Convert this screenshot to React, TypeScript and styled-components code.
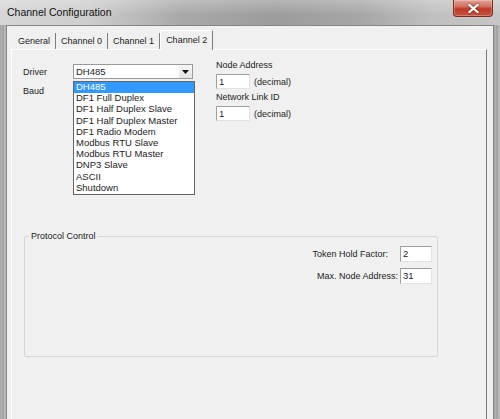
import styled, { createGlobalStyle } from 'styled-components'

const GlobalStyle = createGlobalStyle`
  html, body {
    margin: 0;
    padding: 0;
  }
  body {
    width: 500px;
    height: 419px;
    overflow: hidden;
    background: #f0f0f0;
    font-family: "Liberation Sans", Arial, sans-serif;
    font-size: 9px;
    color: #1c1c1c;
  }
`

const drivers = [
    'DH485',
    'DF1 Full Duplex',
    'DF1 Half Duplex Slave',
    'DF1 Half Duplex Master',
    'DF1 Radio Modem',
    'Modbus RTU Slave',
    'Modbus RTU Master',
    'DNP3 Slave',
    'ASCII',
    'Shutdown',
]

const tabs = ['General', 'Channel 0', 'Channel 1', 'Channel 2']

const App = () => {
    return (
        <>
            <GlobalStyle />
            <Window>
                <TitleBar>
                    <Title>Channel Configuration</Title>
                    <CloseButton>
                        <svg width="11" height="9" viewBox="0 0 11 9">
                            <path
                                d="M1.5 1 L9.5 8 M9.5 1 L1.5 8"
                                stroke="#fff"
                                strokeWidth="2.2"
                                strokeLinecap="square"
                            />
                        </svg>
                    </CloseButton>
                </TitleBar>

                <Frame>
                    <SideFrame />
                    <Client>
                        <TabStrip>
                            {tabs.map((t) => (
                                <Tab key={t} $active={t === 'Channel 2'}>
                                    {t}
                                </Tab>
                            ))}
                        </TabStrip>

                        <Panel>
                            <TopRow>
                                <LeftCol>
                                    <FieldRow>
                                        <Label>Driver</Label>
                                        <ComboWrap>
                                            <Combo>
                                                <ComboText>DH485</ComboText>
                                                <ComboArrow>
                                                    <svg width="7" height="4" viewBox="0 0 7 4">
                                                        <path d="M0 0 H7 L3.5 4 Z" fill="#111" />
                                                    </svg>
                                                </ComboArrow>
                                            </Combo>
                                            <DropList>
                                                {drivers.map((d, i) => (
                                                    <ListItem key={d} $selected={i === 0}>
                                                        {d}
                                                    </ListItem>
                                                ))}
                                            </DropList>
                                        </ComboWrap>
                                    </FieldRow>
                                    <BaudLabel>Baud</BaudLabel>
                                </LeftCol>

                                <RightCol>
                                    <SmallLabel>Node Address</SmallLabel>
                                    <InputRow>
                                        <TextBox $width={34}>1</TextBox>
                                        <Suffix>(decimal)</Suffix>
                                    </InputRow>
                                    <SmallLabel $gap={3}>Network Link ID</SmallLabel>
                                    <InputRow>
                                        <TextBox $width={34}>1</TextBox>
                                        <Suffix>(decimal)</Suffix>
                                    </InputRow>
                                </RightCol>
                            </TopRow>

                            <GroupBox>
                                <Legend>Protocol Control</Legend>
                                <GroupRow $first>
                                    <RowLabel $gap={12}>Token Hold Factor:</RowLabel>
                                    <TextBox $width={32} $height={16}>2</TextBox>
                                </GroupRow>
                                <GroupRow>
                                    <RowLabel $gap={2}>Max. Node Address:</RowLabel>
                                    <TextBox $width={32} $height={16}>31</TextBox>
                                </GroupRow>
                            </GroupBox>
                        </Panel>
                    </Client>
                    <SideFrame />
                </Frame>
            </Window>
        </>
    )
}

const Window = styled.div`
    display: flex;
    flex-direction: column;
    width: 500px;
    height: 419px;
`

const TitleBar = styled.div`
    display: flex;
    justify-content: space-between;
    align-items: flex-start;
    height: 25px;
    flex-shrink: 0;
    background:
        linear-gradient(to bottom, rgba(255, 255, 255, 0.25), rgba(255, 255, 255, 0) 60%),
        linear-gradient(
            to right,
            #d6d6d6 0%,
            #cdcdcd 18%,
            #a9a9a9 36%,
            #9c9c9c 55%,
            #a6a6a6 72%,
            #bfbfbf 86%,
            #c6c6c6 100%
        );
`

const Title = styled.div`
    padding-left: 7px;
    line-height: 24px;
    font-size: 10.5px;
    color: #111;
`

const CloseButton = styled.div`
    display: flex;
    align-items: center;
    justify-content: center;
    width: 40px;
    height: 17px;
    margin-right: 7px;
    box-sizing: border-box;
    border: 1px solid #7a2c22;
    border-top: none;
    border-radius: 0 0 4px 4px;
    background: linear-gradient(to bottom, #e3a396 0%, #d2705e 40%, #bd3a26 55%, #c7553f 100%);
    box-shadow: inset 0 0 0 1px rgba(255, 255, 255, 0.25);

    svg {
        filter: drop-shadow(0 0 1px rgba(80, 0, 0, 0.8));
    }
`

const Frame = styled.div`
    display: flex;
    flex: 1;
    min-height: 0;
`

const SideFrame = styled.div`
    width: 6px;
    flex-shrink: 0;
    background: linear-gradient(
        to right,
        #8c8c8c 0px,
        #bcbcbc 1px,
        #9a9a9a 3px,
        #c4c4c4 5px,
        #a8a8a8 6px
    );
`

const Client = styled.div`
    display: flex;
    flex-direction: column;
    flex: 1;
    min-width: 0;
    padding: 4px 6px 0 4px;
    background: #f0f0f0;
    border: 1px solid #858585;
    border-bottom: none;
`

const TabStrip = styled.div`
    display: flex;
    align-items: flex-end;
    height: 19px;
    padding-left: 2px;
    flex-shrink: 0;
`

const Tab = styled.div<{ $active?: boolean }>`
    position: relative;
    box-sizing: border-box;
    height: ${(p) => (p.$active ? '20px' : '16px')};
    margin-bottom: ${(p) => (p.$active ? '-1px' : '0')};
    padding: 0 5px 0 ${(p) => (p.$active ? '5px' : '5px')};
    line-height: ${(p) => (p.$active ? '19px' : '16px')};
    white-space: nowrap;
    color: #1c1c1c;
    background: #f0f0f0;
    border-right: 1px solid #7d7d7d;
    border-left: ${(p) => (p.$active ? '1px solid #ffffff' : 'none')};
    border-top: ${(p) => (p.$active ? '1px solid #ffffff' : 'none')};
    z-index: ${(p) => (p.$active ? 1 : 0)};
`

const Panel = styled.div`
    display: flex;
    flex-direction: column;
    flex: 1;
    padding: 10px 0 0 11px;
    border-left: 1px solid #ffffff;
    border-top: 1px solid #ffffff;
    border-right: 1px solid #7a7a7a;
`

const TopRow = styled.div`
    display: flex;
    align-items: flex-start;
`

const LeftCol = styled.div`
    display: flex;
    flex-direction: column;
    width: 193px;
    margin-top: 4px;
    flex-shrink: 0;
`

const FieldRow = styled.div`
    display: flex;
    align-items: center;
    height: 15px;
`

const Label = styled.div`
    width: 50px;
    flex-shrink: 0;
`

const BaudLabel = styled.div`
    margin-top: 7px;
    line-height: 11px;
`

const ComboWrap = styled.div`
    position: relative;
    width: 120px;
    height: 15px;
`

const Combo = styled.div`
    display: flex;
    align-items: center;
    box-sizing: border-box;
    width: 100%;
    height: 100%;
    background: #ffffff;
    border: 1px solid #9a9a9a;
`

const ComboText = styled.div`
    flex: 1;
    padding-left: 2px;
    line-height: 13px;
    font-size: 9.5px;
`

const ComboArrow = styled.div`
    display: flex;
    align-items: center;
    justify-content: center;
    width: 13px;
    height: 100%;
    background: linear-gradient(to bottom, #f6f6f6, #e4e4e4);
`

const DropList = styled.div`
    position: absolute;
    top: 17px;
    left: 0;
    width: 122px;
    box-sizing: border-box;
    background: #ffffff;
    border: 1px solid #646464;
    z-index: 5;
`

const ListItem = styled.div<{ $selected?: boolean }>`
    height: 11.2px;
    line-height: 10.5px;
    padding-left: 2px;
    font-size: 9.5px;
    white-space: nowrap;
    color: ${(p) => (p.$selected ? '#ffffff' : '#1c1c1c')};
    background: ${(p) => (p.$selected ? '#3399ff' : 'transparent')};
`

const RightCol = styled.div`
    display: flex;
    flex-direction: column;
`

const SmallLabel = styled.div<{ $gap?: number }>`
    line-height: 11px;
    margin-top: ${(p) => p.$gap ?? 0}px;
`

const InputRow = styled.div`
    display: flex;
    align-items: center;
    margin-top: 3px;
`

const TextBox = styled.div<{ $width: number; $height?: number }>`
    box-sizing: border-box;
    width: ${(p) => p.$width}px;
    height: ${(p) => p.$height ?? 15}px;
    padding-left: 2px;
    line-height: ${(p) => (p.$height ?? 15) - 2}px;
    font-size: 9.5px;
    background: #ffffff;
    border: 1px solid #dfe3e8;
    border-top-color: #9aa0a6;
    border-left-color: #9aa0a6;
`

const Suffix = styled.div`
    margin-left: 4px;
`

const GroupBox = styled.fieldset`
    box-sizing: border-box;
    width: 414px;
    height: 126px;
    margin: 110px 0 0 1px;
    padding: 0 5px 0 4px;
    min-width: 0;
    border: 1px solid #d2d6d9;
    border-radius: 2px;
`

const Legend = styled.legend`
    padding: 0 2px;
    line-height: 11px;
    font-size: 9px;
`

const GroupRow = styled.div<{ $first?: boolean }>`
    display: flex;
    justify-content: flex-end;
    align-items: center;
    height: 16px;
    margin-top: ${(p) => (p.$first ? 4 : 6)}px;
`

const RowLabel = styled.div<{ $gap: number }>`
    margin-right: ${(p) => p.$gap}px;
    white-space: nowrap;
`

export default App
